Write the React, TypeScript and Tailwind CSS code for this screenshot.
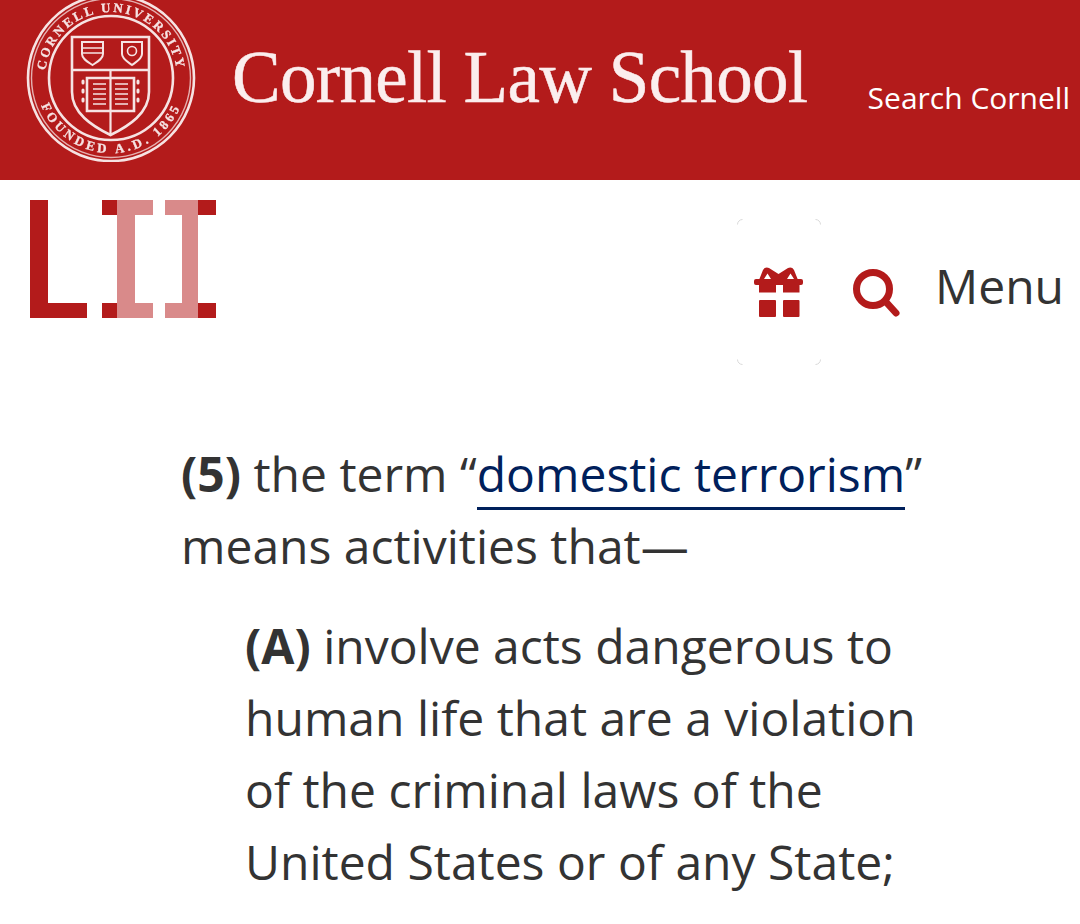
import React from "react";

const ink = "#f6e3e3";

function Seal() {
  return (
    <svg width="172" height="170" viewBox="0 0 172 170" className="shrink-0 block blur-[0.6px]" fill="none">
      <defs>
        <path id="top-arc" d="M 20 86 A 66 66 0 0 1 152 86" />
        <path id="bot-arc" d="M 11 86 A 75 75 0 0 0 161 86" />
      </defs>
      <circle cx="86" cy="86" r="83" stroke={ink} strokeWidth="2.6" />
      <circle cx="86" cy="86" r="79.5" stroke={ink} strokeWidth="1.4" opacity="0.75" />
      <circle cx="86" cy="86" r="62" stroke={ink} strokeWidth="2.6" />
      <text fill={ink} stroke={ink} strokeWidth="0.3" fontFamily="'Liberation Serif', serif" fontSize="13" fontWeight="700" letterSpacing="2.4">
        <textPath href="#top-arc" startOffset="50%" textAnchor="middle">CORNELL UNIVERSITY</textPath>
      </text>
      <text fill={ink} stroke={ink} strokeWidth="0.3" fontFamily="'Liberation Serif', serif" fontSize="13" fontWeight="700" letterSpacing="3.4">
        <textPath href="#bot-arc" startOffset="50%" textAnchor="middle">FOUNDED A.D. 1865</textPath>
      </text>
      <path d="M47 45 H124 V100 C124 121 104 134 85.5 143 C67 134 47 121 47 100 Z" stroke={ink} strokeWidth="2.6" fill="#b31b1b" />
      <path d="M47 78 H124" stroke={ink} strokeWidth="2.6" />
      <path d="M85.5 79 V142" stroke={ink} strokeWidth="2.2" />
      <g transform="translate(0,4)">
        <path d="M57 46 H78 V58 C78 63 72 66 67.5 69 C63 66 57 63 57 58 Z" stroke={ink} strokeWidth="2" />
        <path d="M57 52 H78 M58 57 H77" stroke={ink} strokeWidth="1.6" />
        <path d="M97 46 H117 V58 C117 63 111 66 107 69 C103 66 97 63 97 58 Z" stroke={ink} strokeWidth="2" />
        <circle cx="107" cy="55" r="4.5" stroke={ink} strokeWidth="1.6" />
        <path d="M62 82 H109 V115 H62 Z" stroke={ink} strokeWidth="2.6" />
        <path d="M68 88 H81 M68 93 H81 M68 98 H81 M68 103 H81 M68 108 H81 M90 88 H103 M90 93 H103 M90 98 H103 M90 103 H103 M90 108 H103" stroke={ink} strokeWidth="1.8" opacity="0.75" />
        <path d="M58 85 v2 M58 94 v2 M58 103 v2 M113 85 v2 M113 94 v2 M113 103 v2" stroke={ink} strokeWidth="3" strokeLinecap="round" />
      </g>
    </svg>
  );
}

function LiiLogo() {
  return (
    <svg width="186" height="118" viewBox="0 0 186 118" className="block">
      <path d="M0 0 H18 V103 H57 V118 H0 Z" fill="#b31b1b" />
      <path d="M87 0 H123 V15 H105 V103 H123 V118 H87 Z" fill="#d98a8a" />
      <path d="M72 0 H87 V15 H72 Z M72 103 H87 V118 H72 Z" fill="#b31b1b" />
      <path d="M135 0 H168 V118 H135 V103 H152 V15 H135 Z" fill="#d98a8a" />
      <path d="M168 0 H186 V15 H168 Z M168 103 H186 V118 H168 Z" fill="#b31b1b" />
    </svg>
  );
}

function Gift() {
  return (
    <svg width="50" height="50" viewBox="0 0 50 50" className="block" fill="#b31b1b">
      <rect x="0" y="12" width="49" height="6" rx="2" />
      <rect x="5" y="17" width="17" height="8.5" />
      <rect x="29" y="17" width="16.5" height="8.5" />
      <rect x="5" y="33" width="17" height="17" rx="1" />
      <rect x="29" y="33" width="16.5" height="17" rx="1" />
      <path
        fillRule="evenodd"
        d="M5 13 L9 3 Q11 -0.5 15 1 L24.5 7 L34 1 Q38 -0.5 40 3 L44 13 Z M10 12 H17 L13.5 6.5 Z M33 12 H40 L36.5 6.5 Z"
      />
    </svg>
  );
}

function Corner({ d }: { d: string }) {
  return (
    <svg width="6" height="6" viewBox="0 0 6 6" fill="none" className="block">
      <path d={d} stroke="#d9d9d9" strokeWidth="1" />
    </svg>
  );
}

export default function App() {
  return (
    <div className="w-[1080px] h-[924px] overflow-hidden bg-white font-['Open_Sans',sans-serif] text-[#333333]">
      <header className="h-[180px] bg-[#b31b1b] flex items-start pl-[25px] pr-[10px]">
        <div className="-mt-[8px]"><Seal /></div>
        <div className="ml-[35px] mt-[38px] font-['Liberation_Serif',serif] text-[73px] leading-[80px] tracking-[-0.7px] text-[#fbeeee] [-webkit-text-stroke:0.5px_#fbeeee] whitespace-nowrap blur-[0.5px]">
          Cornell Law School
        </div>
        <div className="ml-auto mt-[78px] text-[30px] leading-[40px] text-white whitespace-nowrap">Search Cornell</div>
      </header>

      <nav className="h-[184px] relative flex items-start pl-[30px] pt-[20px]">
        <LiiLogo />
        <div className="ml-auto flex items-start">
          <div className="w-[84px] h-[146px] mt-[19px] flex flex-col justify-between">
            <div className="flex justify-between"><Corner d="M0.5 5.5 A5 5 0 0 1 5.5 0.5" /><Corner d="M0.5 0.5 A5 5 0 0 1 5.5 5.5" /></div>
            <div className="pl-[17px]"><Gift /></div>
            <div className="flex justify-between"><Corner d="M0.5 0.5 A5 5 0 0 0 5.5 5.5" /><Corner d="M0.5 5.5 A5 5 0 0 0 5.5 0.5" /></div>
          </div>
          <svg width="50" height="50" viewBox="0 0 50 50" fill="none" className="ml-[30px] mt-[68px] block">
            <circle cx="22" cy="21" r="16.5" stroke="#b31b1b" strokeWidth="7" />
            <path d="M35 34 L45 45" stroke="#b31b1b" strokeWidth="7" strokeLinecap="round" />
          </svg>
          <div className="ml-[34px] mr-[16px] mt-[50px] text-[48px] leading-[72px] whitespace-nowrap">Menu</div>
        </div>
      </nav>

      <main className="pl-[181px] pr-[100px] pt-[74px] text-[48px] leading-[72px]">
        <p>
          <strong className="font-bold">(5)</strong> the term “
          <a className="text-[#00205b] border-b-[3px] border-[#00205b] pb-[1px]">domestic terrorism</a>”<br />
          means activities that—
        </p>
        <p className="mt-[28px] pl-[64px]">
          <strong className="font-bold">(A)</strong> involve acts dangerous to<br />
          human life that are a violation<br />
          of the criminal laws of the<br />
          United States or of any State;
        </p>
      </main>
    </div>
  );
}
